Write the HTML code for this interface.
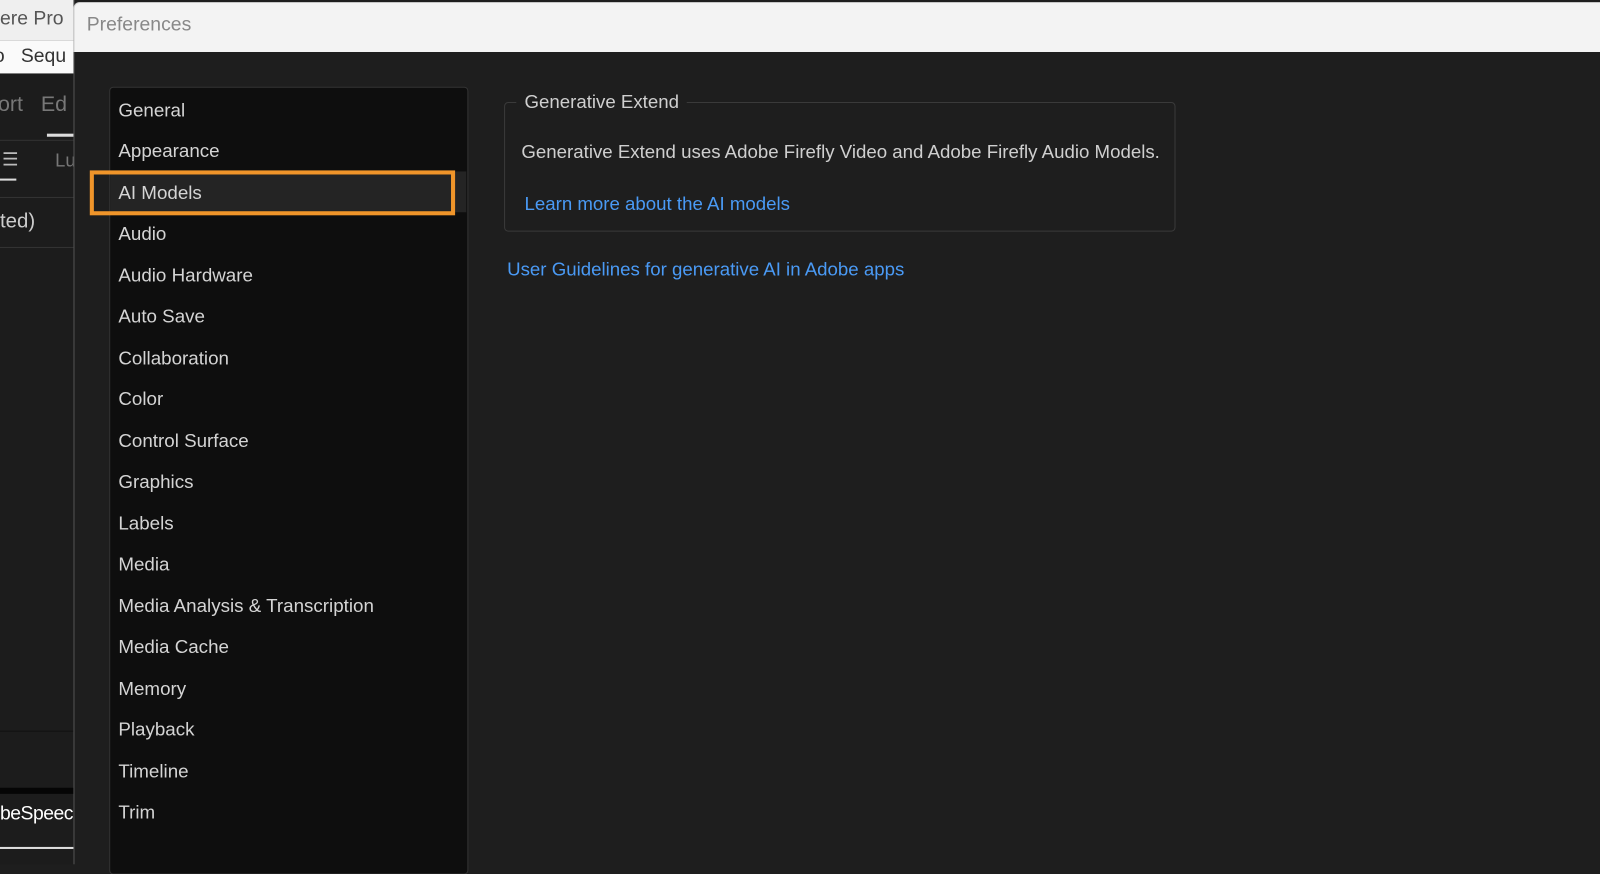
<!DOCTYPE html>
<html><head><meta charset="utf-8"><style>
body{margin:0;width:1600px;height:847px;overflow:hidden;background:#1e1e1e;font-family:"Liberation Sans",sans-serif;position:relative}
#w{position:absolute;left:0;top:0;width:1568px;height:830px;transform:scale(1.0204);transform-origin:0 0}
.a{position:absolute;white-space:nowrap}
.item{position:absolute;left:116px;font-size:18.4px;color:#d4d4d4;line-height:20px}
</style></head><body><div id="w">
<div class="a" style="left:0;top:0;width:72px;height:40px;background:#efefef"></div>
<div class="a" style="left:0;top:8px;font-size:19px;color:#555">ere Pro</div>
<div class="a" style="left:0;top:40px;width:72px;height:32px;background:#fafafa"></div>
<div class="a" style="left:-6px;top:45px;font-size:19px;color:#333">o&nbsp;&nbsp;&nbsp;Sequ</div>
<div class="a" style="left:0;top:72px;width:72px;height:775px;background:#1c1c1c"></div>
<div class="a" style="left:-2px;top:91px;font-size:21px;color:#777">ort&nbsp;&nbsp;&nbsp;Ed</div>
<div class="a" style="left:46px;top:131px;width:26px;height:3px;background:#ddd"></div>
<div class="a" style="left:0;top:137px;width:72px;height:1px;background:#333"></div>
<div class="a" style="left:2px;top:146px;font-size:18px;color:#bbb">☰</div>
<div class="a" style="left:54px;top:147px;font-size:18px;color:#777">Lu</div>
<div class="a" style="left:0;top:175px;width:16px;height:2px;background:#ddd"></div>
<div class="a" style="left:0;top:193px;width:72px;height:1px;background:#333"></div>
<div class="a" style="left:0;top:206px;font-size:20px;color:#ccc">ted)</div>
<div class="a" style="left:0;top:242px;width:72px;height:1px;background:#333"></div>
<div class="a" style="left:0;top:716px;width:72px;height:1px;background:#111"></div>
<div class="a" style="left:0;top:772px;width:72px;height:6px;background:#050505"></div>
<div class="a" style="left:0;top:787px;font-size:19px;color:#fff;letter-spacing:-0.5px">beSpeech</div>
<div class="a" style="left:0;top:830px;width:72px;height:2px;background:#ddd"></div>
<div class="a" style="left:72px;top:0;width:1528px;height:847px;background:#1e1e1e;border-left:1px solid #555"></div>
<div class="a" style="left:72px;top:2px;width:1528px;height:48px;background:#f3f3f3;border-top-left-radius:6px;border-top:1px solid #ccc;border-left:1px solid #ccc"></div>
<div class="a" style="left:85px;top:14px;font-size:19px;color:#888">Preferences</div>
<div class="a" style="left:107px;top:85px;width:350px;height:770px;background:#0e0e0e;border:1px solid #333;border-radius:4px"></div>
<div class="a" style="left:108px;top:168px;width:349px;height:40px;background:#242424"></div>
<div class="item" style="top:98px">General</div>
<div class="item" style="top:138px">Appearance</div>
<div class="item" style="top:179px">AI Models</div>
<div class="item" style="top:219px">Audio</div>
<div class="item" style="top:260px">Audio Hardware</div>
<div class="item" style="top:300px">Auto Save</div>
<div class="item" style="top:341px">Collaboration</div>
<div class="item" style="top:381px">Color</div>
<div class="item" style="top:422px">Control Surface</div>
<div class="item" style="top:462px">Graphics</div>
<div class="item" style="top:503px">Labels</div>
<div class="item" style="top:543px">Media</div>
<div class="item" style="top:584px">Media Analysis &amp; Transcription</div>
<div class="item" style="top:624px">Media Cache</div>
<div class="item" style="top:665px">Memory</div>
<div class="item" style="top:705px">Playback</div>
<div class="item" style="top:746px">Timeline</div>
<div class="item" style="top:786px">Trim</div>
<div class="a" style="left:88px;top:167px;width:350px;height:36px;border:4px solid #f0952a"></div>
<div class="a" style="left:494px;top:100px;width:656px;height:125px;border:1px solid #3a3a3a;border-radius:4px"></div>
<div class="a" style="left:506px;top:88px;padding:0 8px;background:#1e1e1e;font-size:18.3px;color:#cfcfcf;line-height:24px">Generative Extend</div>
<div class="a" style="left:511px;top:138px;font-size:18.3px;color:#cfcfcf">Generative Extend uses Adobe Firefly Video and Adobe Firefly Audio Models.</div>
<div class="a" style="left:514px;top:189px;font-size:18.3px;color:#4a9af5">Learn more about the AI models</div>
<div class="a" style="left:497px;top:253px;font-size:18.3px;color:#4a9af5">User Guidelines for generative AI in Adobe apps</div>
</div></body></html>
